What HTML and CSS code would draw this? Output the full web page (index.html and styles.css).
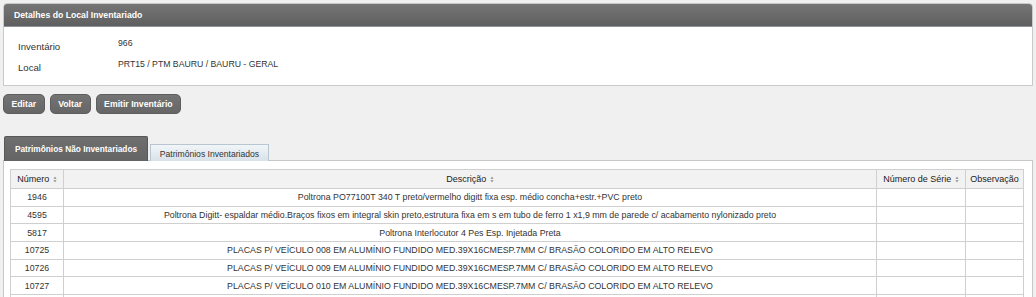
FILE: index.html
```html
<!DOCTYPE html>
<html lang="pt-BR">
<head>
<meta charset="utf-8">
<title>Detalhes do Local Inventariado</title>
<link rel="stylesheet" href="styles.css">
</head>
<body>
<div class="page">
  <section class="panel">
    <div class="panel-head">Detalhes do Local Inventariado</div>
    <div class="panel-body">
      <div class="field">
        <span class="label">Inventário</span>
        <span class="value">966</span>
      </div>
      <div class="field">
        <span class="label">Local</span>
        <span class="value">PRT15 / PTM BAURU / BAURU - GERAL</span>
      </div>
    </div>
  </section>

  <div class="actions">
    <button class="btn">Editar</button>
    <button class="btn">Voltar</button>
    <button class="btn">Emitir Inventário</button>
  </div>

  <div class="tabs">
    <ul class="tab-nav">
      <li class="tab active">Patrimônios Não Inventariados</li>
      <li class="tab">Patrimônios Inventariados</li>
    </ul>
    <div class="tab-panel">
      <table class="grid">
        <colgroup>
          <col class="c-num">
          <col class="c-desc">
          <col class="c-serie">
          <col class="c-obs">
        </colgroup>
        <thead>
          <tr>
            <th>Número <svg class="sort" viewBox="0 0 5 8" width="4" height="7"><path d="M2.5 0.5 L4.5 3 L0.5 3 Z M0.5 5 L4.5 5 L2.5 7.5 Z"/></svg></th>
            <th>Descrição <svg class="sort" viewBox="0 0 5 8" width="4" height="7"><path d="M2.5 0.5 L4.5 3 L0.5 3 Z M0.5 5 L4.5 5 L2.5 7.5 Z"/></svg></th>
            <th>Número de Série <svg class="sort" viewBox="0 0 5 8" width="4" height="7"><path d="M2.5 0.5 L4.5 3 L0.5 3 Z M0.5 5 L4.5 5 L2.5 7.5 Z"/></svg></th>
            <th>Observação</th>
          </tr>
        </thead>
        <tbody>
          <tr><td>1946</td><td>Poltrona PO77100T 340 T preto/vermelho digitt fixa esp. médio concha+estr.+PVC preto</td><td></td><td></td></tr>
          <tr><td>4595</td><td>Poltrona Digitt- espaldar médio.Braços fixos em integral skin preto,estrutura fixa em s em tubo de ferro 1 x1,9 mm de parede c/ acabamento nylonizado preto</td><td></td><td></td></tr>
          <tr><td>5817</td><td>Poltrona Interlocutor 4 Pes Esp. Injetada Preta</td><td></td><td></td></tr>
          <tr><td>10725</td><td>PLACAS P/ VEÍCULO 008 EM ALUMÍNIO FUNDIDO MED.39X16CMESP.7MM C/ BRASÃO COLORIDO EM ALTO RELEVO</td><td></td><td></td></tr>
          <tr><td>10726</td><td>PLACAS P/ VEÍCULO 009 EM ALUMÍNIO FUNDIDO MED.39X16CMESP.7MM C/ BRASÃO COLORIDO EM ALTO RELEVO</td><td></td><td></td></tr>
          <tr><td>10727</td><td>PLACAS P/ VEÍCULO 010 EM ALUMÍNIO FUNDIDO MED.39X16CMESP.7MM C/ BRASÃO COLORIDO EM ALTO RELEVO</td><td></td><td></td></tr>
          <tr class="more"><td></td><td></td><td></td><td></td></tr>
        </tbody>
      </table>
    </div>
  </div>
</div>
</body>
</html>
```

FILE: styles.css
```css
* { box-sizing: border-box; }

html, body {
  margin: 0;
  padding: 0;
  background: #f0f0f0;
  font-family: "Liberation Sans", Arial, sans-serif;
  color: #333;
}

.page {
  padding: 3px 3px 0 3px;
}

/* ---------- Panel ---------- */
.panel {
  width: 1030px;
  border: 1px solid #c9c9c9;
  border-radius: 4px 4px 0 0;
  background: #fff;
}

.panel-head {
  height: 23px;
  padding-left: 10px;
  display: flex;
  align-items: center;
  background: linear-gradient(#757575, #5f5f5f);
  border-bottom: 1px solid #8d949b;
  border-radius: 3px 3px 0 0;
  color: #fff;
  font-weight: bold;
  font-size: 8.7px;
}

.panel-body {
  padding: 9px 0 7px 14px;
}

.field {
  display: grid;
  grid-template-columns: 100px auto;
  align-items: start;
  height: 21px;
}

.label {
  font-size: 9.6px;
  line-height: 21px;
  color: #333;
}

.value {
  font-size: 8.7px;
  line-height: 15px;
  color: #333;
}

/* ---------- Buttons ---------- */
.actions {
  display: flex;
  gap: 5px;
  margin-top: 8px;
}

.btn {
  height: 20px;
  margin: 0;
  padding: 0 7.5px;
  border: 1px solid #5e5e5e;
  border-radius: 5px;
  background: linear-gradient(#747474, #666666);
  color: #fff;
  font-family: "Liberation Sans", Arial, sans-serif;
  font-weight: bold;
  font-size: 8.7px;
  cursor: pointer;
}

/* ---------- Tabs ---------- */
.tabs {
  margin-top: 22px;
}

.tab-nav {
  list-style: none;
  margin: 0;
  padding: 0 0 0 1px;
  display: flex;
  align-items: flex-end;
  gap: 2px;
}

.tab {
  font-size: 8.7px;
  white-space: nowrap;
  margin-bottom: -1px;
}

.tab.active {
  width: 144px;
  height: 25px;
  display: flex;
  align-items: center;
  justify-content: center;
  padding-bottom: 1px;
  background: linear-gradient(#6f6f6f, #646464);
  border: 1px solid #575757;
  border-bottom: none;
  border-radius: 2px 2px 0 0;
  color: #fff;
  font-weight: bold;
  font-size: 8.3px;
}

.tab:not(.active) {
  width: 119px;
  height: 17px;
  display: flex;
  align-items: center;
  justify-content: center;
  padding-top: 1px;
  background: linear-gradient(#f1f5f8, #d9e2e9);
  border: 1px solid #b9c6d2;
  border-bottom: none;
  color: #333;
  font-size: 8.6px;
}

.tab-panel {
  width: 1030px;
  height: 137px;
  border: 1px solid #c7c7c7;
  border-bottom: none;
  background: #fff;
  padding: 8px 10px 0 6px;
  overflow: hidden;
}

/* ---------- Table ---------- */
.grid {
  width: 1013px;
  border-collapse: collapse;
  table-layout: fixed;
  font-size: 8.8px;
}

.c-num { width: 53px; }
.c-desc { width: 813px; }
.c-serie { width: 89px; }
.c-obs { width: 58px; }

.grid th,
.grid td {
  border: 1px solid #cfcfcf;
  text-align: center;
  padding: 0 2px;
  white-space: nowrap;
  overflow: hidden;
}

.grid th {
  height: 19px;
  background: #f2f2f2;
  font-weight: normal;
  color: #222;
  font-size: 9px;
}

.grid td {
  height: 17.67px;
  color: #333;
}

.sort {
  fill: #888;
  vertical-align: -1px;
  margin-left: 1px;
}
```
